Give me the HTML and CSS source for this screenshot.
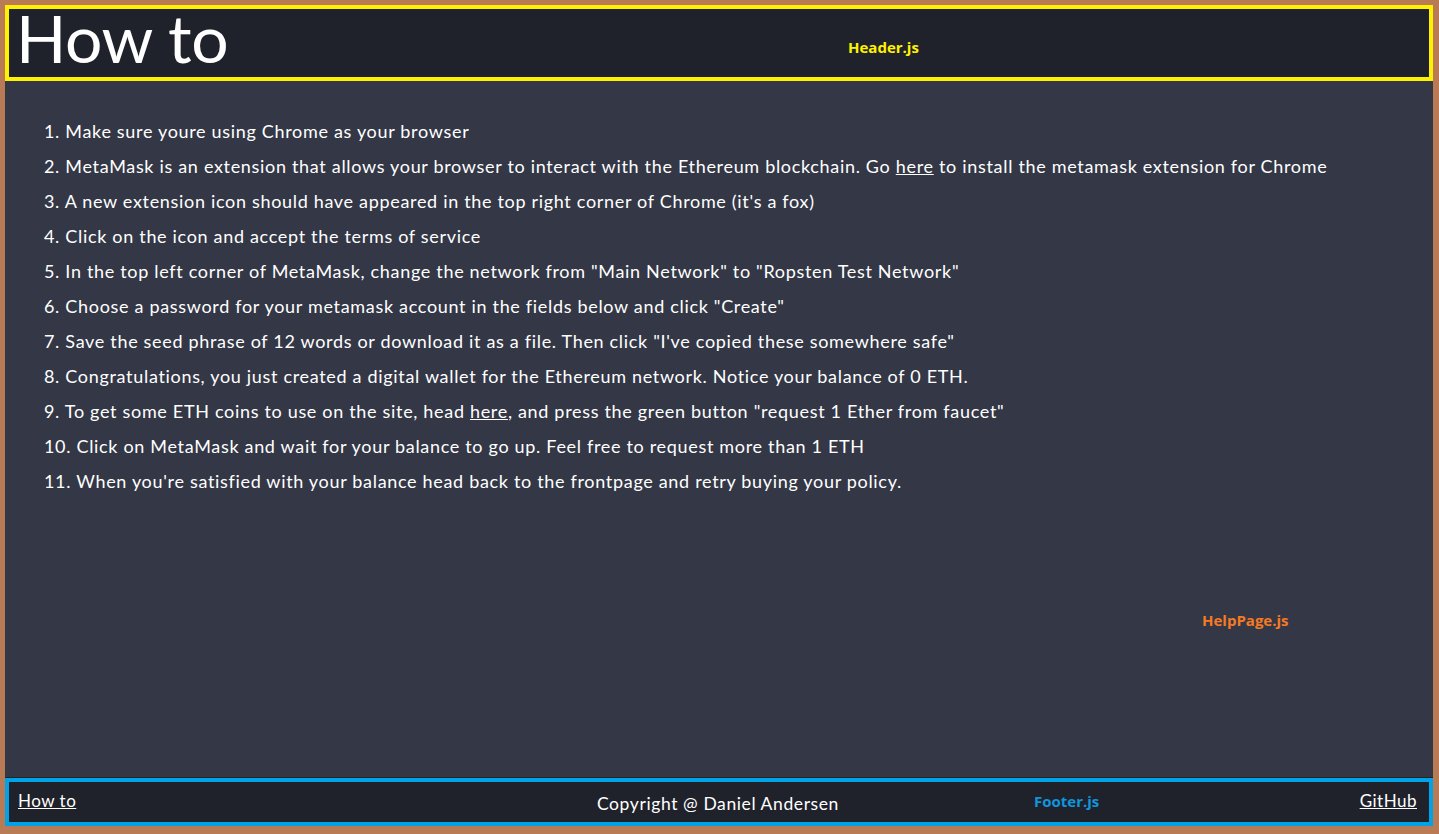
FILE: index.html
```html
<!DOCTYPE html>
<html>
<head>
<meta charset="utf-8">
<title>How to</title>
<link rel="stylesheet" href="styles.css">
</head>
<body>
<div class="page">
  <header class="header">
    <h1 class="title">How to</h1>
    <span class="tag tag-header">Header.js</span>
  </header>
  <main class="help">
    <div class="steps">
      <p>1. Make sure youre using Chrome as your browser</p>
      <p>2. MetaMask is an extension that allows your browser to interact with the Ethereum blockchain. Go <a href="#">here</a> to install the metamask extension for Chrome</p>
      <p>3. A new extension icon should have appeared in the top right corner of Chrome (it's a fox)</p>
      <p>4. Click on the icon and accept the terms of service</p>
      <p>5. In the top left corner of MetaMask, change the network from "Main Network" to "Ropsten Test Network"</p>
      <p>6. Choose a password for your metamask account in the fields below and click "Create"</p>
      <p>7. Save the seed phrase of 12 words or download it as a file. Then click "I've copied these somewhere safe"</p>
      <p>8. Congratulations, you just created a digital wallet for the Ethereum network. Notice your balance of 0 ETH.</p>
      <p>9. To get some ETH coins to use on the site, head <a href="#">here</a>, and press the green button "request 1 Ether from faucet"</p>
      <p>10. Click on MetaMask and wait for your balance to go up. Feel free to request more than 1 ETH</p>
      <p>11. When you're satisfied with your balance head back to the frontpage and retry buying your policy.</p>
    </div>
    <span class="tag tag-help">HelpPage.js</span>
  </main>
  <footer class="footer">
    <a class="foot-link" href="#">How to</a>
    <span class="copy">Copyright @ Daniel Andersen</span>
    <a class="foot-link" href="#">GitHub</a>
    <span class="tag tag-footer">Footer.js</span>
  </footer>
</div>
</body>
</html>
```
FILE: styles.css
```css
html, body {
  margin: 0;
  padding: 0;
}
body {
  background: #b97a56;
  font-family: Lato, "Noto Sans", sans-serif;
  color: #ffffff;
}
.page {
  margin: 5px 6px 0 5px;
  height: 821px;
  display: flex;
  flex-direction: column;
  background: #343746;
}
.header {
  position: relative;
  height: 68px;
  border: 4px solid #fff200;
  background: #20222b;
  display: flex;
  align-items: flex-start;
  padding-left: 7px;
}
.title {
  margin: 0;
  font-weight: 400;
  font-size: 66px;
  line-height: 58px;
  letter-spacing: -0.4px;
  color: #ffffff;
}
.tag {
  position: absolute;
  font-family: "Open Sans", "DejaVu Sans", sans-serif;
  font-weight: 700;
  font-size: 15px;
  line-height: 20px;
}
.tag-header {
  left: 839px;
  top: 28px;
  color: #fff200;
}
.tag-help {
  left: 1197px;
  top: 529px;
  color: #f47a24;
}
.tag-footer {
  left: 1025px;
  top: 9px;
  color: #0f96dc;
}
.help {
  position: relative;
  flex: 1;
  padding: 33px 0 0 39px;
  border-bottom: 1px solid #22242c;
}
.steps p {
  margin: 0;
  font-size: 18px;
  line-height: 35px;
  letter-spacing: 0.68px;
}
.steps a {
  color: #ffffff;
  text-decoration: underline;
}
.footer {
  position: relative;
  height: 40px;
  border: 4px solid #00a2e8;
  background: #20222b;
  display: flex;
  align-items: center;
  justify-content: space-between;
  padding: 0 12px 0 9px;
}
.foot-link {
  color: #ffffff;
  font-size: 17px;
  letter-spacing: 0.5px;
  text-decoration: underline;
  margin-top: -4px;
}
.copy {
  font-size: 17.5px;
  letter-spacing: 0.6px;
  margin-top: 2px;
}
```
